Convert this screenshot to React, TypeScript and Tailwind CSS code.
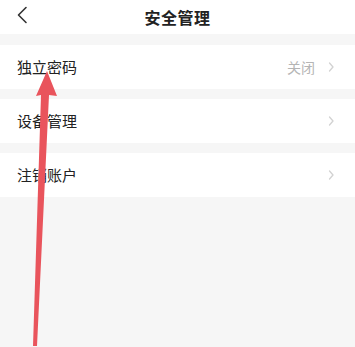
import React from 'react';

const font = { fontFamily: '"Noto Sans CJK SC", "Noto Sans", sans-serif' };

const Chevron = () => (
  <svg width="8" height="12" viewBox="0 0 8 12" fill="none" className="ml-3">
    <path d="M2.5 2 L6 6 L2.5 10" stroke="#d2d2d2" strokeWidth="1.3" strokeLinecap="round" strokeLinejoin="round" />
  </svg>
);

const Row = ({ label, value }: { label: string; value?: string }) => (
  <div className="flex items-center h-[44px] bg-white pl-[17px] pr-[20px]">
    <span className="flex-1 text-[15px] text-[#222]">{label}</span>
    {value && <span className="text-[14px] text-[#b5b5b5]">{value}</span>}
    <Chevron />
  </div>
);

export default function App() {
  return (
    <div className="relative w-[355px] h-[347px] bg-[#f6f6f6] overflow-hidden" style={font}>
      <div className="relative flex items-center justify-center h-[34px] bg-white">
        <svg width="12" height="18" viewBox="0 0 12 18" fill="none" className="absolute left-[16px] top-[6px]">
          <path d="M10 1.5 L2.5 9 L10 16.5" stroke="#333" strokeWidth="1.6" strokeLinecap="round" strokeLinejoin="round" />
        </svg>
        <span className="text-[16px] font-bold text-[#222] tracking-[0.5px]">安全管理</span>
      </div>
      <div className="flex flex-col gap-[10px] pt-[11px]">
        <Row label="独立密码" value="关闭" />
        <Row label="设备管理" />
        <Row label="注销账户" />
      </div>
      <svg className="absolute left-0 top-0 pointer-events-none" width="355" height="347" viewBox="0 0 355 347">
        <path d="M47 71 L57 96 L49 95 L37 346 L33 346 L41 95 L36 96 Z" fill="#e9545c" />
      </svg>
    </div>
  );
}
